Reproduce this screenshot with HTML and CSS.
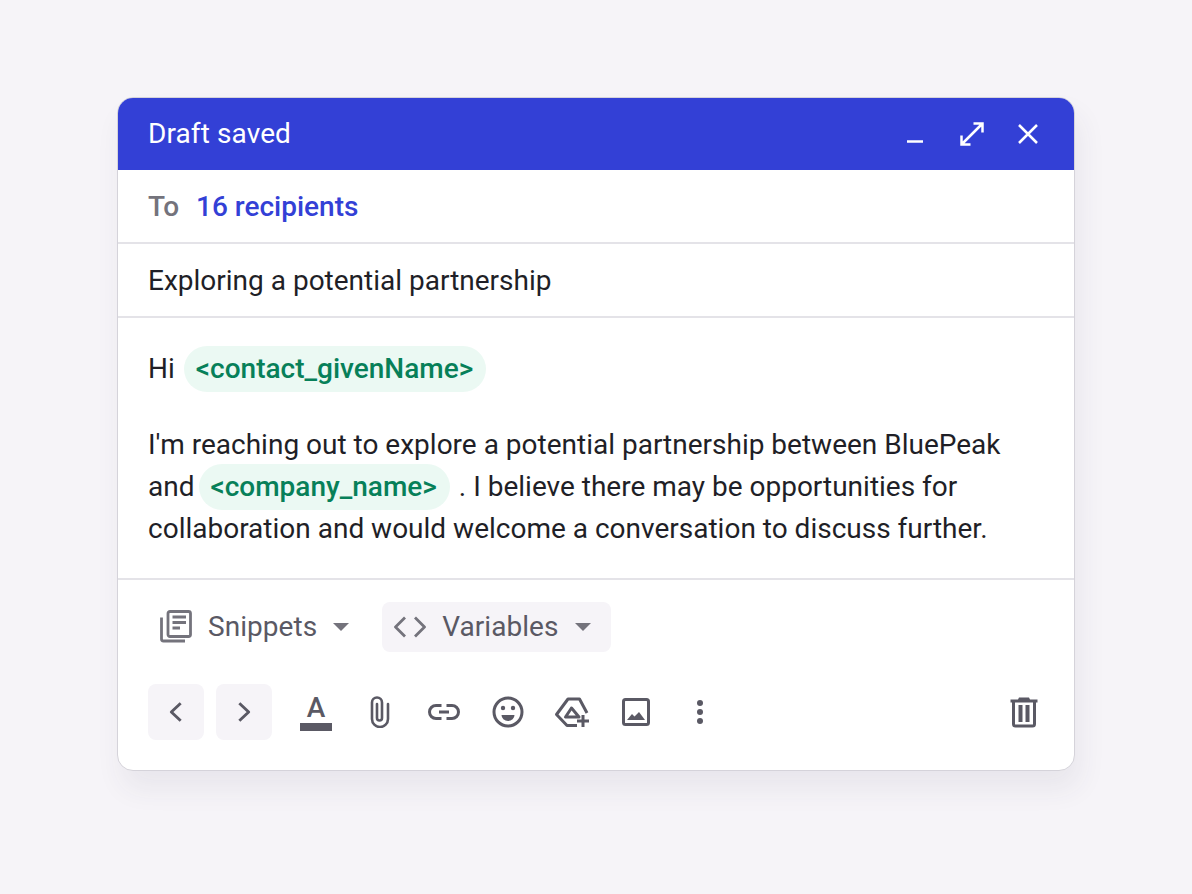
FILE: index.html
```html
<!DOCTYPE html>
<html lang="en">
<head>
<meta charset="utf-8">
<title>Draft saved</title>
<link rel="stylesheet" href="styles.css">
</head>
<body>
<main class="compose">
  <header class="titlebar">
    <span class="title">Draft saved</span>
    <div class="window-actions">
      <svg class="wa" viewBox="0 0 32 32"><path d="M7 23.500h16" /></svg>
      <svg class="wa" viewBox="0 0 32 32"><path d="M5.500 26.500L26.500 5.500M17.500 5.500h9v9M5.500 17.500v9h9" /></svg>
      <svg class="wa" viewBox="0 0 32 32"><path d="M7 7l18 18M25 7L7 25" /></svg>
    </div>
  </header>
  <div class="row to"><span class="to-label">To</span><span class="to-value">16 recipients</span></div>
  <div class="row subject">Exploring a potential partnership</div>
  <section class="body">
    <p class="greeting">Hi <span class="chip chip-first">&lt;contact_givenName&gt;</span></p>
    <p class="para">I'm reaching out to explore a potential partnership between BluePeak<br>and <span class="chip chip-second">&lt;company_name&gt;</span> . I believe there may be opportunities for<br>collaboration and would welcome a conversation to discuss further.</p>
  </section>
  <div class="menus">
    <div class="menu">
      <svg class="menu-icon" viewBox="0 0 32 34"><path class="line" d="M1.500 7.500V29a2 2 0 0 0 2 2H25" /><rect class="line" x="8" y="1.500" width="22.500" height="25" rx="2" /><path class="line" d="M12.500 7h13.500M12.500 12.500h13.500M12.500 18h7.500" /></svg>
      <span class="menu-label">Snippets</span>
      <i class="caret"></i>
    </div>
    <div class="menu menu-active">
      <svg class="menu-icon" viewBox="0 0 32 34"><path class="line" d="M11 7.500L1.500 17l9.500 9.500M21 7.500l9.500 9.500-9.500 9.500" /></svg>
      <span class="menu-label">Variables</span>
      <i class="caret"></i>
    </div>
  </div>
  <div class="toolbar">
    <div class="nav-btn"><svg class="nav-icon" viewBox="0 0 24 24"><path class="line" d="M16 4.500L8 12l8 7.500" /></svg></div>
    <div class="nav-btn"><svg class="nav-icon" viewBox="0 0 24 24"><path class="line" d="M8 4.500l8 7.500-8 7.500" /></svg></div>
    <div class="tools">
      <div class="tool format"><span class="format-a">A</span><i class="format-bar"></i></div>
      <svg class="tool" viewBox="0 0 32 32"><path class="line thin" d="M24 8v15a8 8 0 0 1-16 0V6.500a5 5 0 0 1 10 0V22a2.500 2.500 0 0 1-5 0V8" /></svg>
      <svg class="tool" viewBox="0 0 32 32"><path class="line" d="M13.500 9.500H8a6.500 6.500 0 0 0 0 13h5.500M18.500 9.500H24a6.500 6.500 0 0 1 0 13h-5.500M11 16h10" /></svg>
      <svg class="tool" viewBox="0 0 32 32"><circle class="line" cx="16" cy="16" r="14" /><circle class="fill" cx="11" cy="12" r="2.200" /><circle class="fill" cx="21" cy="12" r="2.200" /><path class="fill" d="M9.500 19h13a6.500 6 0 0 1-13 0z" /></svg>
      <svg class="tool drive" viewBox="0 0 38 32"><path class="line" d="M33 17L25.500 3H14L2.500 18.500 13 29.500h10M17.500 12L11.500 21H25z" /><path class="line" d="M29 19v12M23 25h12" /></svg>
      <svg class="tool" viewBox="0 0 32 32"><rect class="line" x="3.500" y="3.500" width="25" height="25" rx="2" /><path class="fill" d="M7 24l5-6 2.500 2.500L19 16l6 8z" /></svg>
      <svg class="tool" viewBox="0 0 32 32"><circle class="fill" cx="16" cy="7" r="3" /><circle class="fill" cx="16" cy="16" r="3" /><circle class="fill" cx="16" cy="25" r="3" /></svg>
    </div>
    <svg class="tool trash" viewBox="0 0 32 32"><path class="fill" d="M11 1.500h10l1 2h7.500v3h-27v-3H10z" /><path class="line" d="M5.500 6v22a2 2 0 0 0 2 2h17a2 2 0 0 0 2-2V6" /><path class="fill" d="M10.500 9h4v17h-4zM17.500 9h4v17h-4z" /></svg>
  </div>
</main>
</body>
</html>
```

FILE: styles.css
```css
* { box-sizing: border-box; }
html, body { margin: 0; height: 100%; }
body {
  background: #f6f4f8;
  font-family: Roboto, "Liberation Sans", sans-serif;
  color: #1f1f27;
  padding: 97px 0 0 117px;
  overflow: hidden;
}
.compose {
  width: 958px;
  height: 674px;
  background: #fff;
  border: 1px solid #d5d3da;
  border-radius: 16px;
  box-shadow: 5px 18px 28px rgba(60, 55, 80, .07);
  overflow: hidden;
  display: flex;
  flex-direction: column;
}
.titlebar {
  height: 72px;
  flex: none;
  background: #3340d6;
  color: #fff;
  display: flex;
  align-items: center;
  justify-content: space-between;
  padding: 0 30px;
}
.title { font-size: 28px; line-height: 32px; letter-spacing: .1px; }
.window-actions { display: flex; gap: 24px; }
.wa { width: 32px; height: 32px; fill: none; stroke: #fff; stroke-width: 2.500; }
.row {
  height: 74px;
  flex: none;
  display: flex;
  align-items: center;
  padding: 0 30px;
  border-bottom: 2px solid #e4e3e8;
  font-size: 28px;
}
.to { gap: 17px; }
.to-label { color: #74737c; font-weight: 500; }
.to-value { color: #3340d6; font-weight: 500; }
.body {
  height: 262px;
  flex: none;
  padding: 28px 30px 0;
  border-bottom: 2px solid #e4e3e8;
  font-size: 28px;
  line-height: 42px;
}
.body p { margin: 0; }
.greeting { height: 46px; display: flex; align-items: center; gap: 9px; }
.body .para { margin-top: 32px; }
.chip {
  display: inline-block;
  background: #ebf9f3;
  color: #078059;
  font-weight: 500;
  border-radius: 23px;
  height: 46px;
  line-height: 46px;
}
.chip-first { padding: 0 13px 0 12px; }
.chip-second {
  padding: 0 13px 0 11px;
  margin: -4px 2px -2px -2px;
  vertical-align: baseline;
}
.menus {
  height: 94px;
  flex: none;
  display: flex;
  align-items: center;
  padding: 0 30px;
  font-size: 28px;
  color: #5a5964;
}
.menu {
  height: 50px;
  display: flex;
  align-items: center;
  border-radius: 8px;
  padding: 0 18px 0 12px;
  margin-right: 15px;
}
.menu-active { background: #f6f4f8; padding-right: 20px; margin-right: 0; }
.menu-icon { width: 32px; height: 34px; margin-right: 16px; }
.menu-label { line-height: 32px; letter-spacing: .05px; }
.line { fill: none; stroke: #5a5964; stroke-width: 3; stroke-linejoin: round; }
.line.thin { stroke-width: 2.600; stroke-linecap: round; }
.menu-icon .line { stroke: #74737c; stroke-width: 2.800; }
.fill { fill: #5a5964; }
.caret {
  width: 0;
  height: 0;
  margin-left: 16px;
  border-left: 8px solid transparent;
  border-right: 8px solid transparent;
  border-top: 8px solid #74737c;
}
.menu-active .caret { margin-left: 17px; }
.toolbar {
  height: 56px;
  flex: none;
  display: flex;
  align-items: center;
  padding: 0 30px;
  margin-top: 10px;
}
.nav-btn {
  width: 56px;
  height: 56px;
  margin-right: 12px;
  background: #f6f4f8;
  border-radius: 8px;
  display: flex;
  align-items: center;
  justify-content: center;
}
.nav-icon { width: 28px; height: 28px; }
.nav-icon .line { stroke-width: 2.500; }
.tools { display: flex; align-items: center; gap: 32px; margin-left: 16px; }
.tool { width: 32px; height: 32px; flex: none; display: block; }
.tool.drive { width: 38px; margin: 0 -4px 0 -2px; }
.format { display: flex; flex-direction: column; align-items: center; height: 40px; }
.format-a { font-size: 28px; line-height: 28px; margin-top: 2px; color: #5a5964; font-weight: 500; }
.format-bar { width: 32px; height: 8px; background: #5a5964; margin-top: 1px; }
.trash { margin-left: auto; margin-right: 4px; }
```
